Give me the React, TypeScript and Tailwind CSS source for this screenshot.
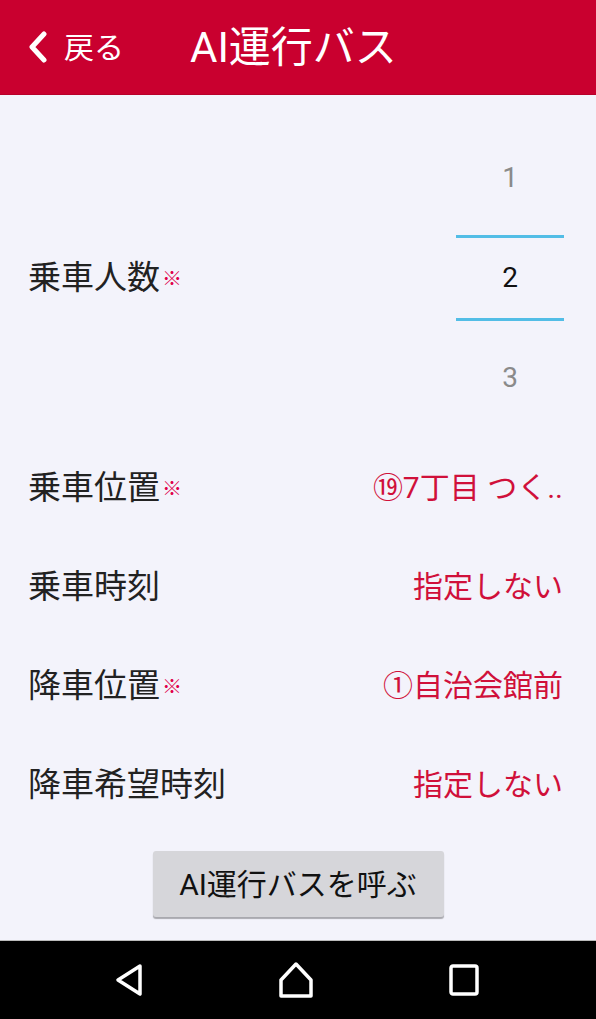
const font = "font-['Roboto','Noto_Sans_CJK_JP',sans-serif]";

function Required() {
  return <span className="ml-[2px] align-[3px] text-[20px] font-bold text-[#e0004a]">※</span>;
}

function Row({ label, value, required }: { label: string; value: string; required?: boolean }) {
  return (
    <div className="flex h-[99px] items-center justify-between pl-[28px] pr-[33px]">
      <div className="text-[33px] text-[#222]">
        {label}
        {required && <Required />}
      </div>
      <div className="text-[30px] text-[#d0103a]">{value}</div>
    </div>
  );
}

export default function App() {
  return (
    <div className={`${font} flex h-[1019px] w-[596px] flex-col overflow-hidden bg-[#f3f3fb]`}>
      <header className="flex h-[95px] shrink-0 items-center border-b border-[#b8002a] bg-[#c9002f] text-white">
        <svg width="22" height="32" viewBox="0 0 22 32" className="ml-[27px]">
          <path d="M17 3 L5 16 L17 29" fill="none" stroke="white" strokeWidth="5" strokeLinecap="round" strokeLinejoin="round" />
        </svg>
        <span className="ml-[15px] text-[30px]">戻る</span>
        <h1 className="ml-[66px] text-[42px] font-normal">AI運行バス</h1>
      </header>

      <main className="flex flex-1 flex-col">
        <div className="mt-[33px] flex items-center justify-between pl-[28px] pr-[32px]">
          <div className="text-[33px] text-[#222]">
            乗車人数
            <Required />
          </div>
          <div className="flex w-[108px] flex-col items-center text-[28px]">
            <div className="flex h-[100px] items-center text-[#8a8a8a]">1</div>
            <div className="mt-[7px] flex h-[86px] w-full items-center justify-center border-y-[3px] border-[#52bde6] text-[#111]">
              2
            </div>
            <div className="mt-[7px] flex h-[100px] items-center text-[#8a8a8a]">3</div>
          </div>
        </div>

        <div className="mt-[10px]">
          <Row label="乗車位置" value="⑲7丁目 つく.." required />
          <Row label="乗車時刻" value="指定しない" />
          <Row label="降車位置" value="①自治会館前" required />
          <Row label="降車希望時刻" value="指定しない" />
        </div>

        <div className="mt-[17px] flex justify-center">
          <button className="h-[66px] w-[291px] rounded-[3px] bg-[#d6d6da] text-[30px] text-[#111] shadow-[0_2px_1px_rgba(0,0,0,0.3)]">
            AI運行バスを呼ぶ
          </button>
        </div>
      </main>

      <nav className="flex h-[79px] shrink-0 items-center border-t border-[#bbb] bg-black pl-[113px]">
        <svg width="32" height="36" viewBox="0 0 32 36">
          <path d="M27 4 L5 18 L27 32 Z" fill="none" stroke="white" strokeWidth="3.5" strokeLinejoin="round" />
        </svg>
        <svg width="36" height="38" viewBox="0 0 36 38" className="ml-[133px]">
          <path d="M18 3 L33 19 L33 35 L3 35 L3 19 Z" fill="none" stroke="white" strokeWidth="3.5" strokeLinejoin="round" />
        </svg>
        <svg width="30" height="32" viewBox="0 0 30 32" className="ml-[135px]">
          <rect x="2" y="2" width="26" height="28" rx="2" fill="none" stroke="white" strokeWidth="3.5" />
        </svg>
      </nav>
    </div>
  );
}
